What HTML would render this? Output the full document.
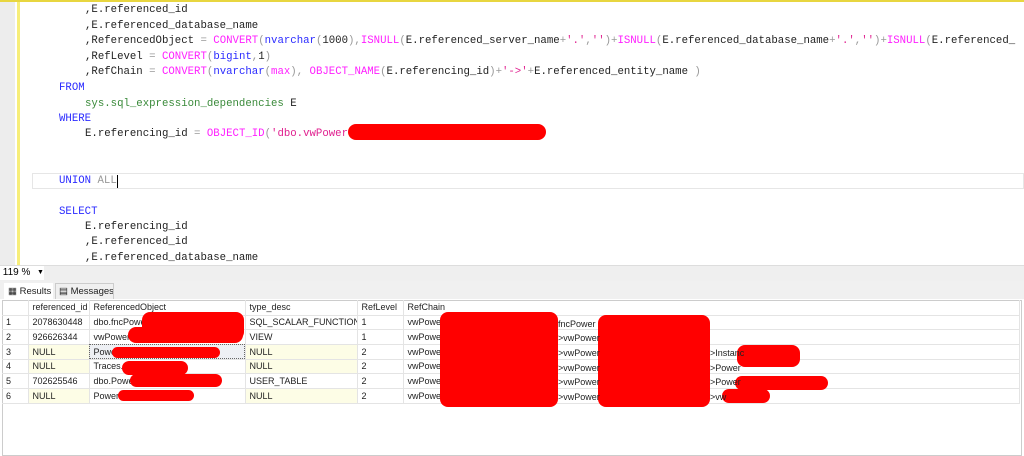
<!DOCTYPE html>
<html><head><meta charset="utf-8"><style>
body{margin:0;width:1024px;height:454px;overflow:hidden;background:#fff;position:relative;font-family:"Liberation Sans",sans-serif}
.ed{position:absolute;left:0;top:0;width:1024px;height:265px;background:#fff;overflow:hidden}
.gut{position:absolute;left:0;top:0;width:15px;height:265px;background:#ededed}
.ybar{position:absolute;left:17px;top:0;width:3px;height:265px;background:#f7ee7a}
.topbar{position:absolute;left:0;top:0;width:1024px;height:2px;background:#e8d640}
.ln{position:absolute;font-family:"Liberation Mono",monospace;font-size:10.7px;white-space:pre;color:#222;line-height:15px}
.k{color:#2b2bff}.f{color:#ff20ff}.g{color:#999}.s{color:#e0208f}.sy{color:#3a8a3a}
.cur{position:absolute;left:32px;top:173px;width:992px;height:16px;border:1px solid #e6e6e6;box-sizing:border-box}
.zb{position:absolute;left:0;top:265px;width:1024px;height:16px;background:#efefef;border-top:1px solid #ddd}
.dd{position:absolute;left:0;top:266px;width:44px;height:14px;background:#fff;font-size:10px;line-height:14px}
.tabs{position:absolute;left:0;top:281px;width:1024px;height:18px;background:#f0f0f0}
.tab{position:absolute;top:283px;height:16px;font-size:9.5px;line-height:16px;border:1px solid #ccc;border-bottom:none;box-sizing:border-box;white-space:nowrap;overflow:hidden;padding-left:3px;color:#222}
.grid{position:absolute;left:2px;top:300px;width:1018px;height:154px;border:1px solid #ccc;background:#fff}
table{border-collapse:collapse;table-layout:fixed;width:1018px;font-size:9px;color:#222;position:absolute;left:2px;top:300px}
td{height:14.7px;padding:0 0 0 4px;border-right:1px solid #e4e4e4;border-bottom:1px solid #e4e4e4;white-space:nowrap;overflow:hidden;box-sizing:border-box}
tr.h td{height:15px}
.n{background:#fdfde6}
.r{position:absolute;background:#f00;border-radius:8px}
.t{position:absolute;font-size:9px;color:#222}
</style></head><body>
<div class="ed">
<div class="gut"></div><div class="ybar"></div><div class="topbar"></div>
<div class="cur"></div>
<div class="ln" style="left:85px;top:3px">,E.referenced_id</div>
<div class="ln" style="left:85px;top:19px">,E.referenced_database_name</div>
<div class="ln" style="left:85px;top:34px">,ReferencedObject <span class="g">=</span> <span class="f">CONVERT</span><span class="g">(</span><span class="k">nvarchar</span><span class="g">(</span>1000<span class="g">),</span><span class="f">ISNULL</span><span class="g">(</span>E.referenced_server_name<span class="g">+</span><span class="s">'.'</span><span class="g">,</span><span class="s">''</span><span class="g">)+</span><span class="f">ISNULL</span><span class="g">(</span>E.referenced_database_name<span class="g">+</span><span class="s">'.'</span><span class="g">,</span><span class="s">''</span><span class="g">)+</span><span class="f">ISNULL</span><span class="g">(</span>E.referenced_</div>
<div class="ln" style="left:85px;top:50px">,RefLevel <span class="g">=</span> <span class="f">CONVERT</span><span class="g">(</span><span class="k">bigint</span><span class="g">,</span>1<span class="g">)</span></div>
<div class="ln" style="left:85px;top:65px">,RefChain <span class="g">=</span> <span class="f">CONVERT</span><span class="g">(</span><span class="k">nvarchar</span><span class="g">(</span><span class="f">max</span><span class="g">),</span> <span class="f">OBJECT_NAME</span><span class="g">(</span>E.referencing_id<span class="g">)+</span><span class="s">'-&gt;'</span><span class="g">+</span>E.referenced_entity_name <span class="g">)</span></div>
<div class="ln k" style="left:59px;top:81px">FROM</div>
<div class="ln sy" style="left:85px;top:97px">sys.sql_expression_dependencies <span style="color:#222">E</span></div>
<div class="ln k" style="left:59px;top:112px">WHERE</div>
<div class="ln" style="left:85px;top:127px">E.referencing_id <span class="g">=</span> <span class="f">OBJECT_ID</span><span class="g">(</span><span class="s">'dbo.vwPower                           '</span><span class="g">)</span></div>
<div class="r" style="left:348px;top:124px;width:198px;height:16px"></div>
<div class="ln" style="left:59px;top:174px"><span class="k">UNION</span> <span class="g">ALL</span></div>
<div style="position:absolute;left:117px;top:175px;width:1px;height:13px;background:#000"></div>
<div class="ln k" style="left:59px;top:205px">SELECT</div>
<div class="ln" style="left:85px;top:220px">E.referencing_id</div>
<div class="ln" style="left:85px;top:235px">,E.referenced_id</div>
<div class="ln" style="left:85px;top:251px">,E.referenced_database_name</div>
</div>
<div class="zb"></div>
<div class="dd">&nbsp;119 %<span style="position:absolute;left:37px;font-size:7px">▼</span></div>
<div class="tabs"></div>
<div class="tab" style="left:4px;width:49px;background:#fff;border-color:#fff">&#9638; Results</div>
<div class="tab" style="left:55px;width:59px">&#9636; Messages</div>
<div class="grid"></div>
<table>
<colgroup><col style="width:26px"><col style="width:61px"><col style="width:156px"><col style="width:112px"><col style="width:46px"><col></colgroup>
<tr class="h"><td></td><td>referenced_id</td><td>ReferencedObject</td><td>type_desc</td><td>RefLevel</td><td>RefChain</td></tr>
<tr><td>1</td><td>2078630448</td><td>dbo.fncPower</td><td>SQL_SCALAR_FUNCTION</td><td>1</td><td>vwPower</td></tr>
<tr><td>2</td><td>926626344</td><td>vwPower</td><td>VIEW</td><td>1</td><td>vwPower</td></tr>
<tr><td>3</td><td class="n">NULL</td><td style="background:#eef0f4;outline:1px dotted #666;outline-offset:-1px">Power.Instanc</td><td class="n">NULL</td><td>2</td><td>vwPower</td></tr>
<tr><td>4</td><td class="n">NULL</td><td>Traces.</td><td class="n">NULL</td><td>2</td><td>vwPower</td></tr>
<tr><td>5</td><td>702625546</td><td>dbo.Power</td><td>USER_TABLE</td><td>2</td><td>vwPower</td></tr>
<tr><td>6</td><td class="n">NULL</td><td>Power.vw</td><td class="n">NULL</td><td>2</td><td>vwPower</td></tr>
</table>
<div class="r" style="left:142px;top:312px;width:102px;height:28px"></div>
<div class="r" style="left:128px;top:327px;width:115px;height:16px"></div>
<div class="r" style="left:112px;top:347px;width:108px;height:11px"></div>
<div class="r" style="left:122px;top:361px;width:66px;height:14px"></div>
<div class="r" style="left:130px;top:374px;width:92px;height:13px"></div>
<div class="r" style="left:118px;top:390px;width:76px;height:11px"></div>
<div class="r" style="left:440px;top:312px;width:118px;height:95px"></div>
<div class="r" style="left:598px;top:315px;width:112px;height:92px"></div>
<div class="r" style="left:737px;top:345px;width:63px;height:22px"></div>
<div class="r" style="left:735px;top:376px;width:93px;height:14px"></div>
<div class="r" style="left:722px;top:389px;width:48px;height:14px"></div>
<div class="t" style="left:558px;top:319px">fncPower</div>
<div class="t" style="left:558px;top:333px">&gt;vwPower</div>
<div class="t" style="left:558px;top:348px">&gt;vwPower</div>
<div class="t" style="left:558px;top:363px">&gt;vwPower</div>
<div class="t" style="left:558px;top:377px">&gt;vwPower</div>
<div class="t" style="left:558px;top:392px">&gt;vwPower</div>
<div class="t" style="left:710px;top:348px">&gt;Instanc</div>
<div class="t" style="left:710px;top:363px">&gt;Power</div>
<div class="t" style="left:710px;top:377px">&gt;Power</div>
<div class="t" style="left:710px;top:392px">&gt;vw</div>
</body></html>
